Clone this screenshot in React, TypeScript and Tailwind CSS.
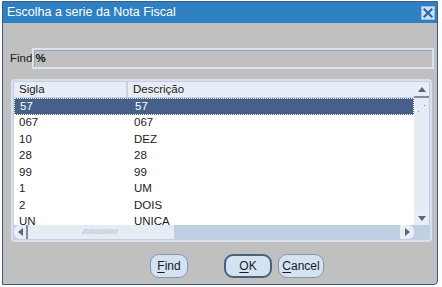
import React from 'react'

const ROWS: [string, string][] = [
  ['57', '57'],
  ['067', '067'],
  ['10', 'DEZ'],
  ['28', '28'],
  ['99', '99'],
  ['1', 'UM'],
  ['2', 'DOIS'],
  ['UN', 'UNICA'],
]

function CloseIcon() {
  return (
    <div className="flex h-[14px] w-[14px] items-center justify-center bg-[#cfe0f1] border border-[#9bbbe0]">
      <svg width="10" height="10" viewBox="0 0 10 10">
        <path d="M1.5 1.5 L8.5 8.5 M8.5 1.5 L1.5 8.5" stroke="#2a67a8" strokeWidth="2.2" strokeLinecap="square" />
      </svg>
    </div>
  )
}

function Btn({ u, rest, w, strong }: { u: string; rest: string; w: string; strong?: boolean }) {
  return (
    <button
      className={`flex h-[24px] items-center justify-center rounded-[9px] bg-[#d5e2f2] text-[12px] text-[#1b1b1b] ${w} ${
        strong ? 'border-2 border-[#4a5f80]' : 'border border-[#8598b3]'
      }`}
    >
      <span className="underline underline-offset-2">{u}</span>
      {rest}
    </button>
  )
}

export default function App() {
  return (
    <div
      className="h-[287px] w-[442px] overflow-hidden bg-white pl-[2px] pt-[1px]"
      style={{ fontFamily: '"Liberation Sans", Arial, sans-serif' }}
    >
      <div className="flex h-[284px] w-[436px] flex-col overflow-hidden rounded-br-[4px] border border-[#3e5b86] bg-[#c0c0c0]">
        {/* title bar */}
        <div className="flex h-[21px] shrink-0 items-center justify-between bg-[#2e80c3] pl-[4px] pr-[2px]">
          <span className="text-[12.5px] leading-none text-white">Escolha a serie da Nota Fiscal</span>
          <CloseIcon />
        </div>

        {/* find row */}
        <div className="mt-[25px] flex items-center pl-[7px] pr-[3px]">
          <span className="text-[11.5px] text-[#1b1b1b]">Find</span>
          <div className="flex h-[21px] flex-1 items-center border-2 border-[#dbe3ee] bg-[#c0c0c0] pl-[1px] shadow-[inset_1px_1px_0_#9aa5b4]">
            <span className="text-[11.5px] font-bold text-[#111]">%</span>
          </div>
        </div>

        {/* table */}
        <div className="ml-[8px] mt-[10px] flex h-[163px] w-[421px] flex-col rounded-[4px] border-2 border-[#d7e1ee] bg-[#c0cfe3] p-[1px]">
          <div className="flex min-h-0 flex-1">
            <div className="flex min-w-0 flex-1 flex-col overflow-hidden bg-white">
              <div className="flex h-[16px] shrink-0 items-center border-b border-[#c2d1e4] bg-[#e8edf5] text-[11.5px] text-[#1b1b1b]">
                <div className="w-[114px] border-r-2 border-[#c8d4e4] pl-[5px]">Sigla</div>
                <div className="pl-[5px]">Descrição</div>
              </div>
              {ROWS.map(([s, d], i) => (
                <div
                  key={s}
                  className={`flex h-[16.5px] shrink-0 items-center text-[11.5px] ${
                    i === 0 ? 'border border-dotted border-white bg-[#466089] text-white' : 'text-[#1b1b1b]'
                  }`}
                >
                  <div className="w-[115px] pl-[5px]">{s}</div>
                  <div className="pl-[5px]">{d}</div>
                </div>
              ))}
            </div>
            {/* vertical scrollbar */}
            <div className="flex w-[15px] shrink-0 flex-col bg-[#e6ecf4]">
              <div className="flex h-[16px] items-center justify-center rounded-t-[6px] border-b-2 border-[#7d8ca3] bg-[#e8eef6]">
                <svg width="8" height="5" viewBox="0 0 8 5">
                  <path d="M0 5 L4 0 L8 5 Z" fill="#5d6478" />
                </svg>
              </div>
              <div className="relative h-[24px]">
                <svg className="absolute left-[3px] top-[6px]" width="9" height="9" viewBox="0 0 9 9">
                  <path d="M1 8 L2 7 M7 2 L8 1" stroke="#7a879c" strokeWidth="1" />
                </svg>
              </div>
              <div className="flex-1" />
              <div className="flex h-[14px] items-center justify-center rounded-b-[6px] bg-[#e8eef6]">
                <svg width="8" height="5" viewBox="0 0 8 5">
                  <path d="M0 0 L4 5 L8 0 Z" fill="#5d6478" />
                </svg>
              </div>
            </div>
          </div>
          {/* horizontal scrollbar */}
          <div className="flex h-[14px] shrink-0">
            <div className="flex flex-1 bg-[#c0cfe3]">
              <div className="flex h-full w-[14px] items-center justify-center rounded-l-[6px] border-r-2 border-[#7d8ca3] bg-[#e8eef6]">
                <svg width="5" height="8" viewBox="0 0 5 8">
                  <path d="M5 0 L0 4 L5 8 Z" fill="#5d6478" />
                </svg>
              </div>
              <div className="flex h-full w-[146px] items-center justify-center bg-[#e6ecf4]">
                <span className="text-[8px] leading-none tracking-[1px] text-[#9aa4b6]">⁄⁄⁄⁄⁄⁄⁄⁄⁄⁄⁄⁄⁄⁄⁄</span>
              </div>
              <div className="flex-1" />
              <div className="flex h-full w-[14px] items-center justify-center rounded-r-[6px] bg-[#e8eef6]">
                <svg width="5" height="8" viewBox="0 0 5 8">
                  <path d="M0 0 L5 4 L0 8 Z" fill="#5d6478" />
                </svg>
              </div>
            </div>
            <div className="w-[15px] bg-[#c0cfe3]" />
          </div>
        </div>

        {/* buttons */}
        <div className="mt-[12px] flex pl-[147px]">
          <Btn u="F" rest="ind" w="w-[38px]" />
          <div className="w-[36px]" />
          <Btn u="O" rest="K" w="w-[48px]" strong />
          <div className="w-[6px]" />
          <Btn u="C" rest="ancel" w="w-[46px]" />
        </div>
      </div>
    </div>
  )
}
